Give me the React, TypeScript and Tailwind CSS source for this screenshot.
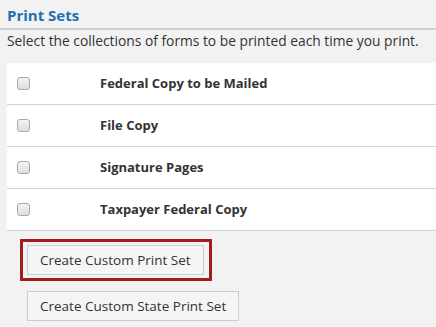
const sets = [
  'Federal Copy to be Mailed',
  'File Copy',
  'Signature Pages',
  'Taxpayer Federal Copy',
]

export default function App() {
  return (
    <div
      className="w-[436px] h-[327px] bg-[#f2f2f2] text-[#333] overflow-hidden"
      style={{ fontFamily: '"Open Sans", "Noto Sans", sans-serif' }}
    >
      <h2 className="pl-[7px] pt-[6px] h-[28px] text-[15px] font-bold text-[#1d70b1] leading-[18px]">
        Print Sets
      </h2>
      <div className="h-[2px] bg-[#d0d0d0]" />
      <p className="pl-[7px] pt-[2px] text-[13.8px] leading-[18px] whitespace-nowrap">
        Select the collections of forms to be printed each time you print.
      </p>
      <div className="ml-[7px] mt-[13px] bg-white">
        {sets.map((s) => (
          <div key={s} className="h-[42px] flex items-center border-b border-[#d4d4d4]">
            <span className="ml-[10px] w-[13px] h-[13px] rounded-[3px] border border-[#a9a9a9] bg-gradient-to-b from-[#f4f4f4] to-[#dedede]" />
            <span className="ml-[70px] text-[13px] font-bold text-[#333]">{s}</span>
          </div>
        ))}
      </div>
      <div className="pl-[20px] pt-[8px] flex flex-col items-start">
        <div className="border-[3px] border-[#a31b1f] py-[3px] pl-[4px] pr-[5px]">
          <button className="h-[30px] px-[12px] bg-[#f5f5f5] border border-[#cccccc] text-[13.5px] text-[#333] whitespace-nowrap">
            Create Custom Print Set
          </button>
        </div>
        <button className="ml-[7px] mt-[10px] h-[30px] px-[12px] bg-[#f5f5f5] border border-[#cccccc] text-[13.5px] text-[#333] whitespace-nowrap">
          Create Custom State Print Set
        </button>
      </div>
    </div>
  )
}
